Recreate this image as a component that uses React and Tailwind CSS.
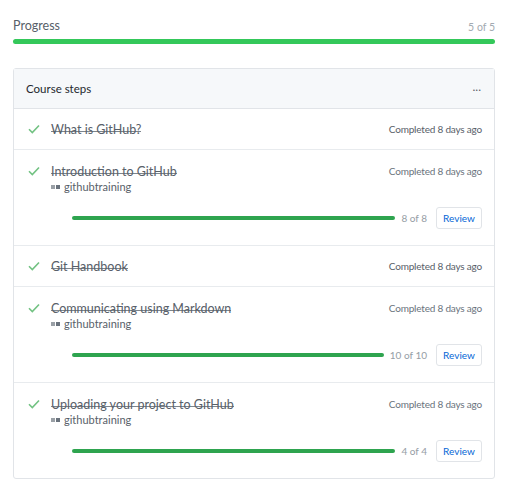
import React from 'react';

const steps = [
  { title: 'What is GitHub?', simple: true },
  { title: 'Introduction to GitHub', count: '8 of 8' },
  { title: 'Git Handbook', simple: true },
  { title: 'Communicating using Markdown', count: '10 of 10' },
  { title: 'Uploading your project to GitHub', count: '4 of 4' },
];

const Check = () => (
  <svg width="12" height="10" viewBox="0 0 12 10" className="shrink-0 text-[#72c282]" fill="none">
    <path d="M1 5.2l3.3 3.3L11 1.5" stroke="currentColor" strokeWidth="1.6" />
  </svg>
);

// struck-through title; the line sits at mid x-height like the original
const Title = ({ children }) => (
  <span className="ml-[11px] inline-block leading-[15px] text-[12.5px] text-[#586069] bg-[linear-gradient(to_bottom,transparent_9px,#7d858d_9px,#7d858d_10px,transparent_10px)]">
    {children}
  </span>
);

const StepRow = ({ step, last }) => {
  if (step.simple) {
    return (
      <div className="flex items-center h-[41px] pl-[14px] pr-[12px] border-b border-[#e8ebee]">
        <Check />
        <Title>{step.title}</Title>
        <span className="ml-auto text-[10px] tracking-[-0.2px] text-[#586069]">Completed 8 days ago</span>
      </div>
    );
  }
  return (
    <div className={`pl-[14px] pr-[12px] pt-[13px] pb-[16px] ${last ? '' : 'border-b border-[#e8ebee]'}`}>
      <div className="flex items-center h-4">
        <Check />
        <Title>{step.title}</Title>
        <span className="ml-auto text-[10px] tracking-[-0.2px] text-[#6a737d]">Completed 8 days ago</span>
      </div>
      <div className="flex items-center h-4 pl-[23px] text-[11px] text-[#586069]">
        <span className="w-[4px] h-[4px] bg-[#9aa0a6]" />
        <span className="w-[4px] h-[4px] bg-[#6a737d] ml-[1px]" />
        <span className="ml-[4px]">githubtraining</span>
      </div>
      <div className="flex items-center mt-3 pl-[44px]">
        <div className="flex-1 h-[4px] rounded-full bg-[#2ea44f]" />
        <span className="ml-[6px] text-[10px] text-[#959da5]">{step.count}</span>
        <button className="ml-[9px] h-[22px] w-[46px] text-[10px] text-[#0366d6] bg-white border border-[#e1e4e8] rounded-[3px]">
          Review
        </button>
      </div>
    </div>
  );
};

const App = () => {
  return (
    <div className="w-[508px] h-[494px] bg-white px-[13px] pt-[16px] font-['Lato',sans-serif]">
      <div className="flex items-end justify-between h-[20px]">
        <span className="text-[12.5px] text-[#586069]">Progress</span>
        <span className="text-[10.5px] text-[#a3aab1]">5 of 5</span>
      </div>
      <div className="mt-[3px] h-[5px] rounded-full bg-[#34c85a]" />

      <div className="mt-[24px] border border-[#e1e4e8] rounded-[3px]">
        <div className="flex items-center justify-between h-[40px] pl-[12px] pr-[13px] bg-[#f6f8fa] border-b border-[#e1e4e8]">
          <span className="text-[11.5px] text-[#24292e]">Course steps</span>
          <span className="text-[12px] text-[#586069] leading-none pb-1">...</span>
        </div>
        {steps.map((s, i) => (
          <StepRow key={i} step={s} last={i === steps.length - 1} />
        ))}
      </div>
    </div>
  );
};

export default App;
